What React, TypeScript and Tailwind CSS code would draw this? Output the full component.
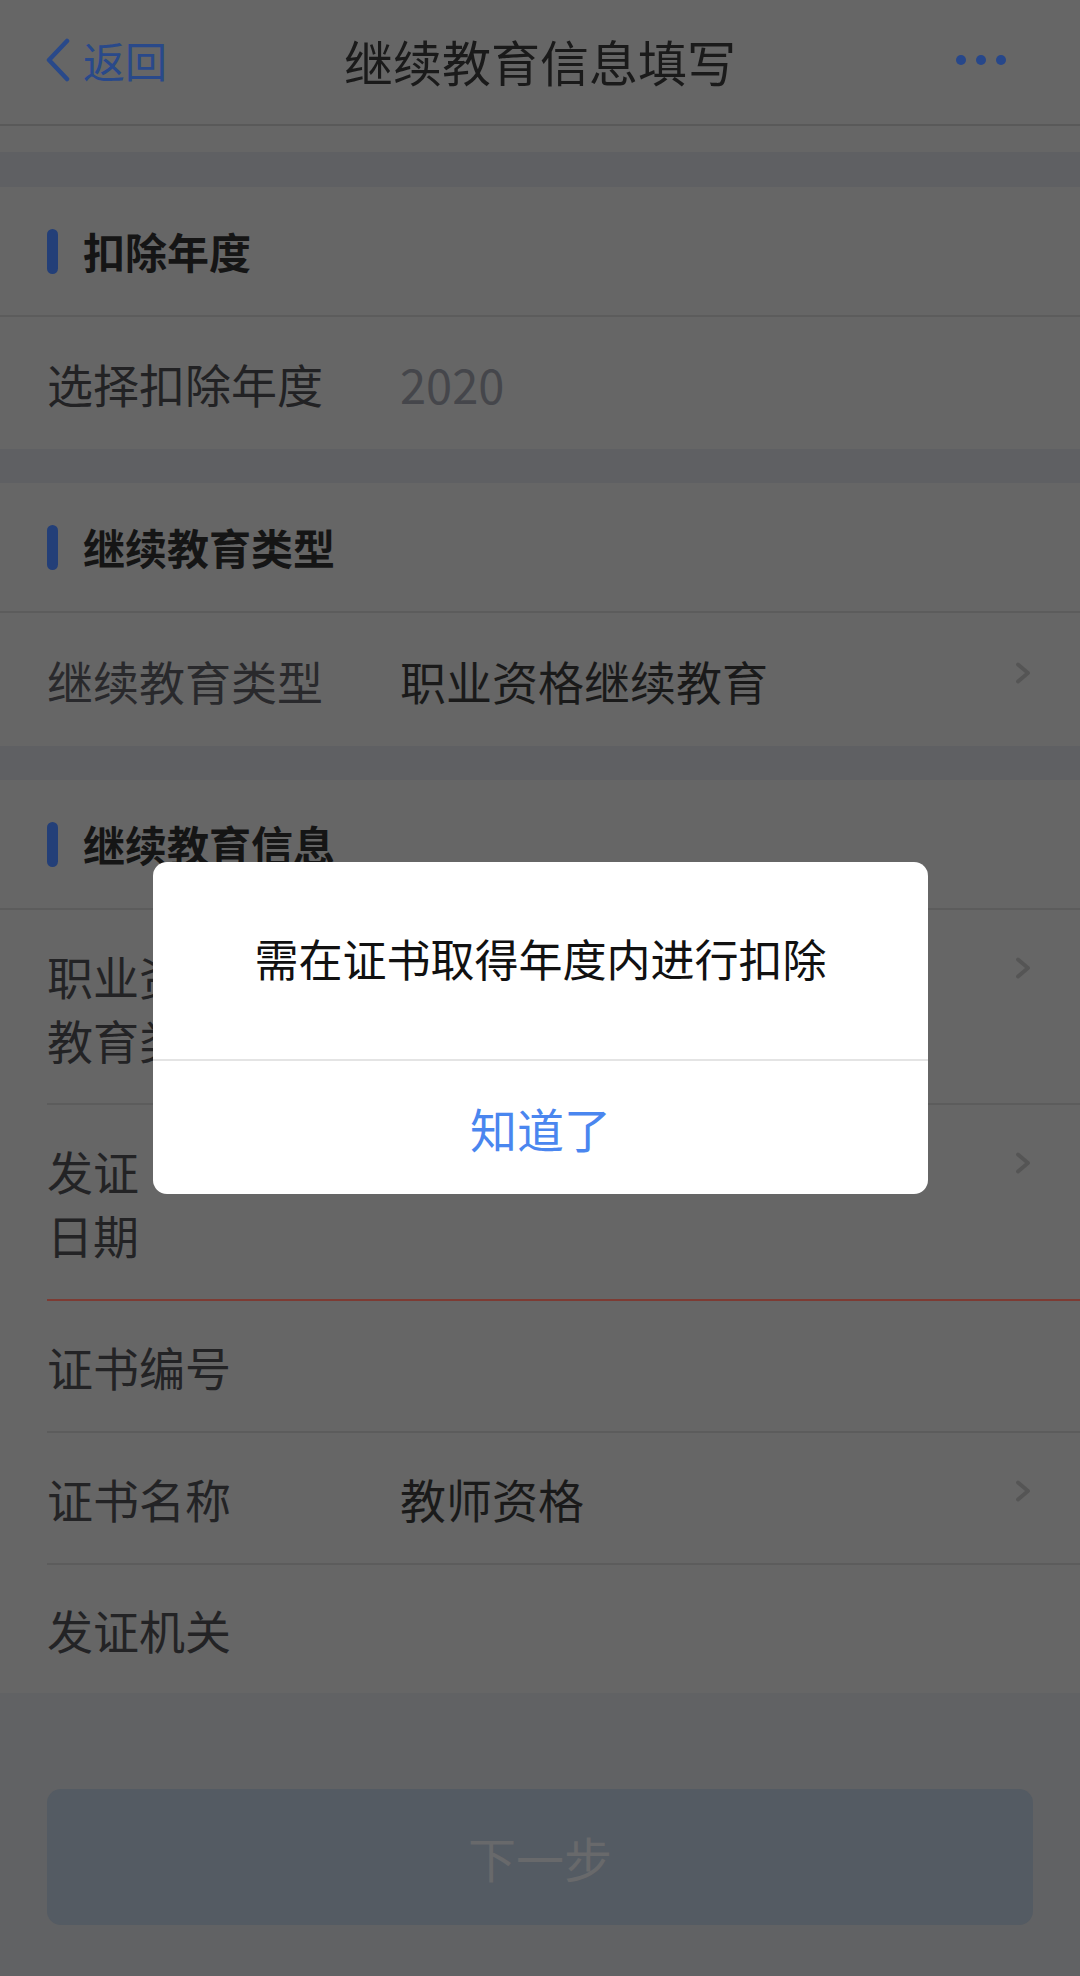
import React from "react";

const FONT = { fontFamily: '"Noto Sans CJK SC", "Noto Sans", sans-serif' };

function Chevron() {
  return (
    <svg width="16" height="22" viewBox="0 0 16 22" className="-translate-y-[7px]">
      <path d="M3 2.5 L13 11 L3 19.5" fill="none" stroke="#555555" strokeWidth="3.8" strokeLinecap="round" strokeLinejoin="round" />
    </svg>
  );
}

function SectionHeader({ title }: { title: string }) {
  return (
    <div className="h-[130px] border-b-2 border-[#5c5c5c] flex items-center pl-[47px]">
      <div className="w-[11px] h-[45px] rounded-full bg-[#233f78]" />
      <div className="ml-[25px] text-[42px] font-bold text-[#151515] leading-none">{title}</div>
    </div>
  );
}

function Band() {
  return <div className="h-[34px] bg-[#5f6063]" />;
}

export default function App() {
  return (
    <div className="relative w-[1080px] h-[1976px] bg-[#666666] overflow-hidden flex flex-col" style={FONT}>
      {/* Nav */}
      <div className="h-[126px] border-b-2 border-[#595959] flex items-center pb-[4px] shrink-0">
        <div className="w-[250px] flex items-center pl-[45px]">
          <svg width="26" height="44" viewBox="0 0 26 44">
            <path d="M22 3 L4 22 L22 41" fill="none" stroke="#29498a" strokeWidth="4.5" strokeLinecap="round" strokeLinejoin="round" />
          </svg>
          <span className="ml-[12px] text-[42px] text-[#29498a] leading-none">返回</span>
        </div>
        <div className="flex-1 text-center text-[49px] text-[#1a1a1a] leading-none">继续教育信息填写</div>
        <div className="w-[250px] flex items-center justify-end pr-[74px] gap-[10px]">
          <div className="w-[10px] h-[10px] rounded-full bg-[#27478a]" />
          <div className="w-[10px] h-[10px] rounded-full bg-[#27478a]" />
          <div className="w-[10px] h-[10px] rounded-full bg-[#27478a]" />
        </div>
      </div>
      <div className="h-[26px] shrink-0" />
      <div className="h-[35px] bg-[#5f6063] shrink-0" />

      {/* Section 1 */}
      <SectionHeader title="扣除年度" />
      <div className="h-[132px] flex items-center pl-[47px] text-[46px] leading-none shrink-0">
        <div className="w-[353px] text-[#222224]">选择扣除年度</div>
        <div className="text-[#45464b] text-[47px]">2020</div>
      </div>
      <Band />

      {/* Section 2 */}
      <SectionHeader title="继续教育类型" />
      <div className="h-[133px] flex items-center pl-[47px] pr-[49px] text-[46px] leading-none shrink-0">
        <div className="w-[353px] text-[#29292c]">继续教育类型</div>
        <div className="flex-1 text-[#1a1a1a]">职业资格继续教育</div>
        <Chevron />
      </div>
      <Band />

      {/* Section 3 */}
      <SectionHeader title="继续教育信息" />
      <div className="ml-[47px] h-[195px] border-b-2 border-[#5c5c5c] flex items-center pr-[49px] text-[46px] leading-[64px] shrink-0">
        <div className="w-[353px] text-[#232325]">
          <div>职业资格继续</div>
          <div>教育类型</div>
        </div>
        <div className="flex-1" />
        <div className="-translate-y-[32px] flex"><Chevron /></div>
      </div>
      <div className="ml-[47px] h-[196px] border-b-2 border-[#7d3b33] flex items-center pr-[49px] text-[46px] leading-[64px] shrink-0">
        <div className="w-[353px] text-[#232325]">
          <div>发证</div>
          <div>日期</div>
        </div>
        <div className="flex-1" />
        <div className="-translate-y-[32px] flex"><Chevron /></div>
      </div>
      <div className="ml-[47px] h-[132px] border-b-2 border-[#5c5c5c] flex items-center text-[46px] leading-none shrink-0">
        <div className="w-[353px] text-[#232325]">证书编号</div>
      </div>
      <div className="ml-[47px] h-[132px] border-b-2 border-[#5c5c5c] flex items-center pr-[49px] text-[46px] leading-none shrink-0">
        <div className="w-[353px] text-[#232325]">证书名称</div>
        <div className="flex-1 text-[#1a1a1a]">教师资格</div>
        <Chevron />
      </div>
      <div className="ml-[47px] h-[128px] flex items-center text-[46px] leading-none shrink-0">
        <div className="w-[353px] text-[#232325]">发证机关</div>
      </div>

      {/* Bottom */}
      <div className="flex-1 bg-[#616264] px-[47px] pt-[96px]">
        <div className="h-[136px] rounded-[14px] bg-[#545b63] flex items-center justify-center text-[48px] text-[#68696b] leading-none">
          下一步
        </div>
      </div>

      {/* Dialog */}
      <div className="absolute left-[153px] top-[862px] w-[775px] bg-white rounded-[14px] overflow-hidden">
        <div className="h-[199px] border-b-2 border-[#e4e4e4] flex items-center justify-center text-[44px] text-[#111111] leading-none pb-[6px]">
          需在证书取得年度内进行扣除
        </div>
        <div className="h-[133px] flex items-center justify-center text-[47px] text-[#4a86ef] leading-none">
          知道了
        </div>
      </div>
    </div>
  );
}
